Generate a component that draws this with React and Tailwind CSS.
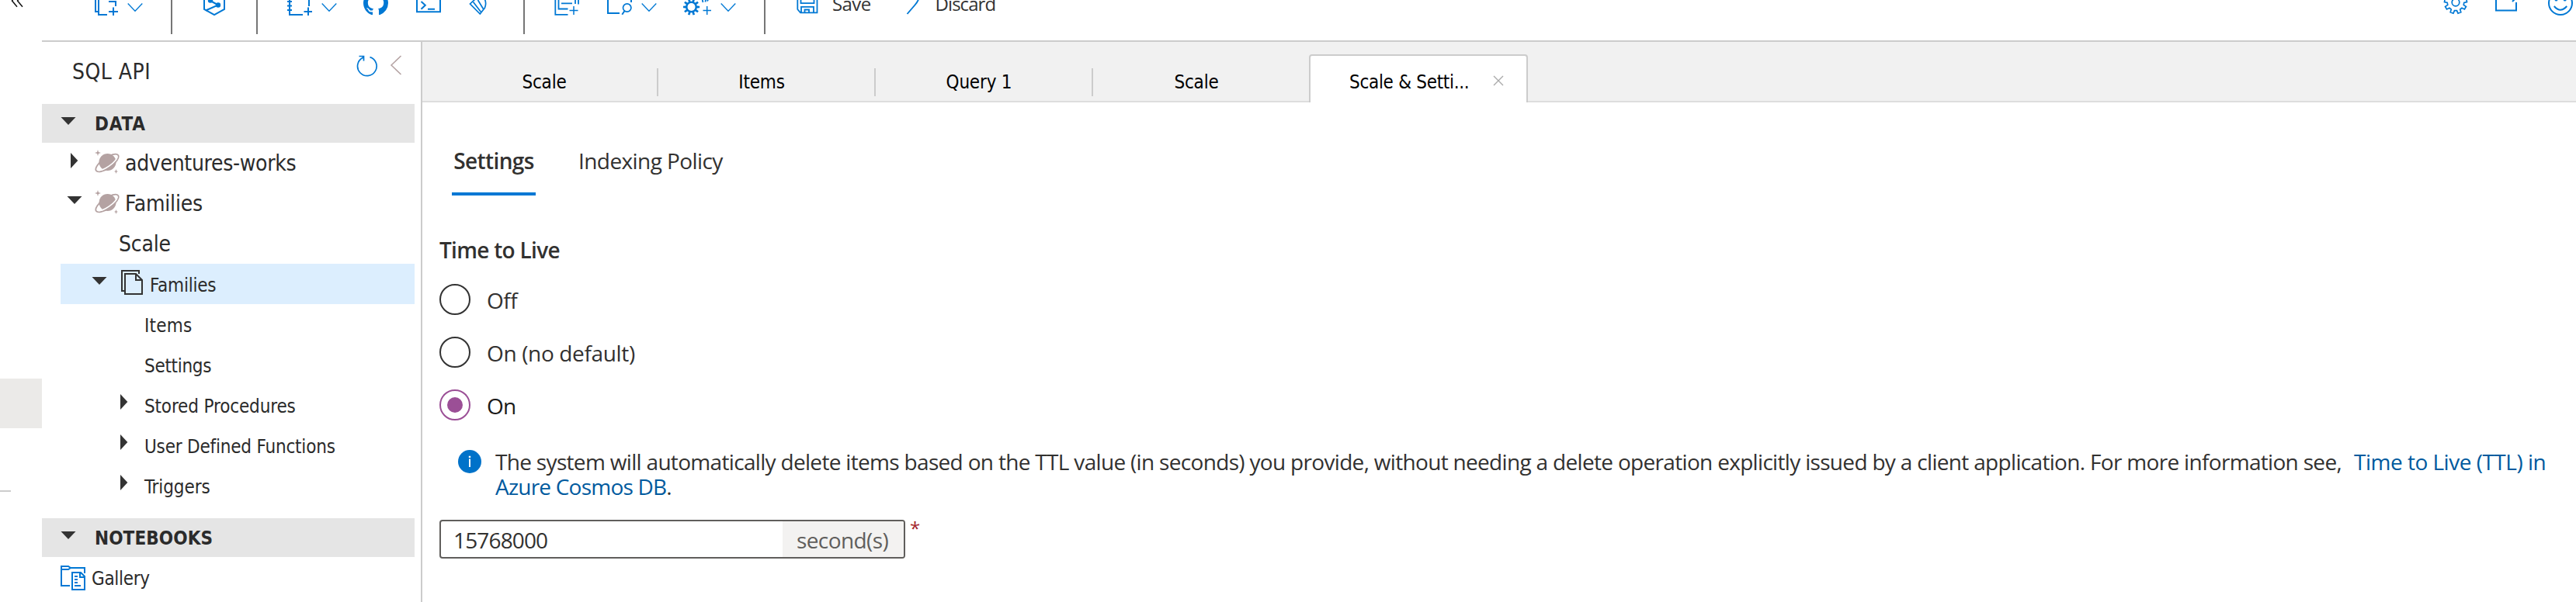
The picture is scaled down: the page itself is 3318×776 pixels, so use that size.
const BLUE = "#0078d4";

function Icon({ x, w, y = 0, h = 24, className = "", children }) {
  return (
    <svg
      width={w}
      height={h}
      viewBox={`${x} ${y} ${w} ${h}`}
      fill="none"
      stroke={BLUE}
      strokeWidth="2"
      className={`shrink-0 ${className}`}
    >
      {children}
    </svg>
  );
}

function gearPath(cx, cy, outer, inner, teeth) {
  const step = (Math.PI * 2) / teeth;
  const pts = [];
  for (let i = 0; i < teeth; i++) {
    const a = Math.PI / 2 + (i + 0.5) * step;
    [[-0.3, inner], [-0.2, outer], [0.2, outer], [0.3, inner]].forEach(([o, r]) => {
      pts.push(`${(cx + Math.cos(a + o * step) * r).toFixed(2)} ${(cy + Math.sin(a + o * step) * r).toFixed(2)}`);
    });
  }
  return `M${pts.join("L")}Z`;
}

function Chevron({ className }) {
  return (
    <Icon x={0} w={20} className={className}>
      <path d="M0.7 4.5L10 14.3L19.3 4.5" strokeWidth="1.3" />
    </Icon>
  );
}

function Separator({ className }) {
  return <div className={`h-[44px] w-[2px] shrink-0 bg-[#767676] ${className}`} />;
}

function Toolbar() {
  return (
    <header className="flex h-[54px] items-start overflow-hidden">
      <Icon x={14} w={16} className="ml-[14px]">
        <path d="M21 -6L15.5 1L22 8.7M28 -6L22.5 1L29 8.7" stroke="#111" strokeWidth="1.5" />
      </Icon>
      <div className="flex h-[54px] flex-1 items-start ml-[24px] border-b-2 border-[#cccccc]">
        <Icon x={122} w={32} className="ml-[68px]">
          <path d="M123 -2V15H127M127 -2V19H138M140 2H149V8" />
          <path d="M140 15H152M146 9.5V20" />
        </Icon>
        <Chevron className="ml-[10px]" />
        <Separator className="ml-[36px]" />
        <Icon x={262} w={28} className="ml-[40px]">
          <path d="M263 -3V11.8L276 19L289 11.8V-3" />
          <path d="M271 1L281 6.5L265 13.5" />
          <circle cx="271" cy="0.5" r="2.2" fill={BLUE} />
          <circle cx="281" cy="6.5" r="2.2" fill={BLUE} />
        </Icon>
        <Separator className="ml-[40px]" />
        <Icon x={370} w={32} className="ml-[38px]">
          <path d="M373 -2V19H390M398 -2V8M370 2H376M370 7.5H376M370 13H376" />
          <path d="M391.5 15H402M397 9.5V20" />
        </Icon>
        <Chevron className="ml-[12px]" />
        <Icon x={468} w={32} className="ml-[34px]">
          <g transform="translate(468 -12) scale(2)" fill={BLUE} stroke="none">
            <path d="M8 0C3.58 0 0 3.58 0 8c0 3.54 2.29 6.53 5.47 7.59.4.07.55-.17.55-.38 0-.19-.01-.82-.01-1.49-2.01.37-2.53-.49-2.69-.94-.09-.23-.48-.94-.82-1.13-.28-.15-.68-.52-.01-.53.63-.01 1.08.58 1.23.82.72 1.21 1.87.87 2.33.66.07-.52.28-.87.51-1.07-1.78-.2-3.64-.89-3.64-3.95 0-.87.31-1.59.82-2.15-.08-.2-.36-1.02.08-2.12 0 0 .67-.21 2.2.82.64-.18 1.32-.27 2-.27.68 0 1.36.09 2 .27 1.53-1.04 2.2-.82 2.2-.82.44 1.1.16 1.92.08 2.12.51.56.82 1.27.82 2.15 0 3.07-1.87 3.75-3.65 3.95.29.25.54.73.54 1.48 0 1.07-.01 1.93-.01 2.2 0 .21.15.46.55.38A8.013 8.013 0 0016 8c0-4.42-3.58-8-8-8z" />
          </g>
        </Icon>
        <Icon x={536} w={32} className="ml-[36px]">
          <path d="M537 -2V15.3H567V-2M542.5 2L547.8 6.7L542.5 11.7M551 11.7H560" />
        </Icon>
        <Icon x={604} w={24} className="ml-[36px]">
          <path d="M613 -2L605.5 5L618.3 18L624.5 10Q627 4 624 -2" strokeWidth="1.7" />
          <path d="M609.5 2.5L619.5 15.5M615.5 0L622.5 11.5" strokeWidth="1.7" />
        </Icon>
        <Separator className="ml-[46px]" />
        <Icon x={714} w={32} className="ml-[38px]">
          <path d="M715.3 -2V18.8H731.5M719.5 -2V11.5H731.5M723 4.3H737M741 -2V5M745 -2V5.5" strokeWidth="1.8" />
          <path d="M733.5 13.5H744.5M739 8V19" strokeWidth="1.5" />
        </Icon>
        <Icon x={782} w={34} className="ml-[36px]">
          <path d="M783 -2V17H798M813 -2V3" />
          <circle cx="807.7" cy="10" r="5.2" strokeWidth="1.7" />
          <path d="M804.5 14L801.3 18.7" />
        </Icon>
        <Chevron className="ml-[10px]" />
        <Icon x={880} w={38} className="ml-[34px]">
          <path d={gearPath(890.5, 9, 10.7, 7.4, 10)} fill={BLUE} stroke="none" />
          <circle cx="890.5" cy="9" r="5" fill="#fff" stroke="none" />
          <path d="M904.5 -1L905.5 3M909 -1L908.5 2.5M912 -0.5L911 1.5" strokeWidth="1.8" />
          <path d="M905.5 13.5H916M910.7 8V19" strokeWidth="1.5" />
        </Icon>
        <Chevron className="ml-[10px]" />
        <Separator className="ml-[36px]" />
        <div className="ml-[40px] flex items-start font-['Open_Sans',sans-serif] text-[24px] leading-[24px] text-[#333]">
          <Icon x={1026} w={28}>
            <path d="M1027.3 -3V12L1031 16.3H1052.5V-3M1031.5 -3V4.2H1048.5V-3M1032 16V8.8H1048V16M1036.5 16V12.5H1042V16" strokeWidth="1.8" />
          </Icon>
          <span className="-mt-[7px] ml-[18px] tracking-[-0.6px]">Save</span>
          <Icon x={1166} w={20} className="ml-[45px]">
            <path d="M1167.5 18L1177 7Q1181.500 2 1182.8 -3" strokeWidth="1.9" />
          </Icon>
          <span className="-mt-[7px] ml-[18px] tracking-[-0.95px]">Discard</span>
        </div>
        <div className="ml-auto flex items-start pr-[3px]">
          <Icon x={3147} w={32}>
            <path d={gearPath(3163, 3, 14.5, 10.8, 9)} strokeWidth="1.7" />
            <circle cx="3163" cy="3" r="4.8" strokeWidth="1.7" />
          </Icon>
          <Icon x={3213} w={30} className="ml-[34px]">
            <path d="M3215 -2V13.5H3241V3M3236 2L3239 -1" />
          </Icon>
          <Icon x={3281} w={34} className="ml-[38px]">
            <circle cx="3298" cy="4" r="15" />
            <circle cx="3292.5" cy="-0.5" r="2" fill={BLUE} stroke="none" />
            <circle cx="3303.7" cy="-0.5" r="2" fill={BLUE} stroke="none" />
            <path d="M3289.8 8Q3298 17.5 3306.2 8" />
          </Icon>
        </div>
      </div>
    </header>
  );
}

function CaretDown({ className = "" }) {
  return (
    <svg width="20" height="10" viewBox="0 0 20 10" className={`shrink-0 ${className}`}>
      <path d="M0.5 0H19.5L10 10Z" fill="#333" />
    </svg>
  );
}

function CaretRight({ className = "" }) {
  return (
    <svg width="10" height="20" viewBox="0 0 10 20" className={`shrink-0 ${className}`}>
      <path d="M0 0V20L9.3 10Z" fill="#333" />
    </svg>
  );
}

function Planet({ className = "" }) {
  return (
    <svg width="32" height="32" viewBox="0 0 32 32" className={`shrink-0 ${className}`}>
      <ellipse cx="16" cy="18" rx="17.3" ry="6.600" transform="rotate(-35 16 18)" fill="none" stroke="#b4a2a2" strokeWidth="1.800" />
      <circle cx="16.5" cy="17" r="11" fill="#b4a2a2" />
      <g transform="rotate(-35 16 18)" fill="none" stroke="#fff" strokeWidth="1.500">
        <path d="M0.700 18.500A15.500 5 0 0 0 31.300 18.500" />
      </g>
      <path d="M4 1L4.900 4.100L8 5L4.900 5.900L4 9L3.100 5.900L0 5L3.100 4.100Z" fill="#b4a2a2" />
      <path d="M27.500 26L28.200 28.300L30 29L28.200 29.700L27.500 32L26.800 29.700L25 29L26.800 28.300Z" fill="#b4a2a2" />
    </svg>
  );
}

function SectionBar({ label, tracking }) {
  return (
    <div className="flex h-[50px] w-[480px] items-center bg-[#e5e5e5] pl-[24px]">
      <CaretDown className="-mt-[7px]" />
      <span className={`ml-[24px] mt-[2px] text-[24px] font-bold leading-[30px] ${tracking}`}>{label}</span>
    </div>
  );
}

function Leaf({ label, tracking, caret }) {
  return (
    <div className="flex h-[52px] items-center pl-[101px]">
      <div className="w-[31px]">{caret && <CaretRight className="-mt-[8px]" />}</div>
      <span className={`mt-[3px] text-[24px] leading-[30px] ${tracking}`}>{label}</span>
    </div>
  );
}

function Sidebar() {
  return (
    <aside className="w-[490px] shrink-0 border-r-2 border-[#cccccc] font-['DejaVu_Sans_Condensed','DejaVu_Sans',sans-serif] text-[#2b2b2b]">
      <div className="flex h-[80px] items-start pl-[39px] pr-[24px] pt-[16px]">
        <span className="mt-[7px] text-[28px] leading-[32px] tracking-[0.5px]">SQL API</span>
        <svg width="28" height="30" viewBox="0 0 28 30" fill="none" stroke={BLUE} strokeWidth="1.700" className="ml-auto">
          <path d="M3.500 2.500H9.500V8.500M9.300 2.800L8 4.500A12.300 12.300 0 1 0 17.500 3.600" />
        </svg>
        <svg width="16" height="28" viewBox="0 0 16 28" fill="none" stroke="#b4a2a2" strokeWidth="1.500" className="ml-[15px]">
          <path d="M14.500 2L2 14L14.500 26" />
        </svg>
      </div>
      <SectionBar label="DATA" tracking="tracking-[0.9px]" />
      <div className="flex h-[52px] items-center pl-[37px]">
        <CaretRight className="-mt-[6px]" />
        <Planet className="-mt-[5px] ml-[21px]" />
        <span className="ml-[7px] mt-[2px] text-[28px] leading-[32px] tracking-[-0.3px]">adventures-works</span>
      </div>
      <div className="flex h-[52px] items-center pl-[32px]">
        <CaretDown className="-mt-[8px]" />
        <Planet className="-mt-[5px] ml-[16px]" />
        <span className="ml-[7px] mt-[2px] text-[28px] leading-[32px] tracking-[-0.2px]">Families</span>
      </div>
      <div className="flex h-[52px] items-center pl-[99px]">
        <span className="mt-[2px] text-[28px] leading-[32px] tracking-[-0.2px]">Scale</span>
      </div>
      <div className="ml-[24px] flex h-[52px] w-[456px] items-center bg-[#dceefe] pl-[40px]">
        <CaretDown className="-mt-[8px]" />
        <svg width="30" height="34" viewBox="0 0 30 34" fill="none" stroke="#333" strokeWidth="2" className="-mt-[4px] ml-[17px]">
          <path d="M5 28H2V2H24V6" />
          <path d="M6 6H20L28 14V32H6ZM20 6V14H28" />
        </svg>
        <span className="ml-[8px] mt-[3px] text-[24px] leading-[30px] tracking-[-0.2px]">Families</span>
      </div>
      <Leaf label="Items" tracking="tracking-[0.2px]" />
      <Leaf label="Settings" tracking="tracking-[-0.3px]" />
      <Leaf label="Stored Procedures" tracking="tracking-[-0.15px]" caret />
      <Leaf label="User Defined Functions" tracking="tracking-[-0.2px]" caret />
      <Leaf label="Triggers" tracking="tracking-[-0.1px]" caret />
      <div className="h-[16px]" />
      <SectionBar label="NOTEBOOKS" tracking="tracking-[0.1px]" />
      <div className="flex h-[52px] items-center pl-[24px]">
        <svg width="32" height="32" viewBox="0 0 32 32" fill="none" stroke={BLUE} strokeWidth="2" className="mt-[2px]">
          <path d="M12 26H1V1H10L13 3H31V10M1 5H10L13 3" />
          <path d="M15 9H26L31 14V31H15ZM25 9V15H31M18 14H22M18 18H22M18 22H22M18 26H26" />
        </svg>
        <span className="ml-[8px] mt-[4px] text-[24px] leading-[30px] tracking-[-0.3px]">Gallery</span>
      </div>
    </aside>
  );
}

const tabs = ["Scale", "Items", "Query 1"];

function TabStrip() {
  return (
    <div className="flex h-[78px] items-end border-b-2 border-[#dddddd] bg-[#f1f1f1] pl-[24px] font-['DejaVu_Sans_Condensed','DejaVu_Sans',sans-serif] text-[24px] leading-[36px] tracking-[-0.2px] text-black">
      {tabs.map((t) => (
        <div key={t} className="mb-[6px] h-[36px] w-[280px] border-r-2 border-[#cccccc] pr-[12px] text-center">
          {t}
        </div>
      ))}
      <div className="mb-[6px] h-[36px] w-[278px] pr-[12px] text-center">Scale</div>
      <div className="-mb-[2px] flex h-[62px] w-[282px] items-start rounded-t-[4px] border-x-2 border-t-2 border-[#cccccc] bg-white pl-[50px] pt-[16px]">
        <span className="w-[154px] whitespace-nowrap tracking-[-0.3px]">Scale &amp; Setti...</span>
        <svg width="14" height="14" viewBox="0 0 14 14" fill="none" stroke="#aaa" strokeWidth="1.400" className="ml-[31px] mt-[9px]">
          <path d="M1 1L13 13M13 1L1 13" />
        </svg>
      </div>
    </div>
  );
}

function Radio({ label, tracking, checked }) {
  return (
    <div className="flex h-[40px] items-center">
      <div
        className={`flex h-[40px] w-[40px] items-center justify-center rounded-full border-2 ${
          checked ? "border-[#9b4f96]" : "border-[#333]"
        }`}
      >
        {checked && <div className="h-[20px] w-[20px] rounded-full bg-[#9b4f96]" />}
      </div>
      <span className={`ml-[21px] mt-[2px] leading-[40px] ${tracking} ${checked ? "text-[#1b1a19]" : ""}`}>{label}</span>
    </div>
  );
}

function SettingsPane() {
  return (
    <section className="pl-[22px] font-['Open_Sans',sans-serif] text-[28px] text-[#323130]">
      <div className="flex pl-[16px] pt-[32px]">
        <div className="h-[88px] w-[108px] border-b-4 border-[#0078d4] text-center font-semibold leading-[87px] tracking-[-0.6px]">
          Settings
        </div>
        <div className="ml-[55px] leading-[87px] tracking-[-0.58px]">Indexing Policy</div>
      </div>
      <div className="mt-[50px] font-semibold leading-[40px] tracking-[-0.7px]">Time to Live</div>
      <div className="mt-[24px] flex flex-col gap-[28px]">
        <Radio label="Off" tracking="tracking-[-0.5px]" />
        <Radio label="On (no default)" tracking="tracking-[-0.35px]" />
        <Radio label="On" tracking="tracking-[-0.9px]" checked />
      </div>
      <div className="mt-[37px] flex items-start pl-[24px]">
        <svg width="30" height="30" viewBox="0 0 30 30" className="mt-[1px] shrink-0">
          <circle cx="15" cy="15" r="15" fill="#0072c9" />
          <path d="M14 11.500H16V22H14ZM13.800 7.800H16.200V10H13.800Z" fill="#fff" />
        </svg>
        <p className="ml-[18px] whitespace-nowrap leading-[32px]">
          <span className="inline-block w-[2394px] tracking-[-0.68px]">
            The system will automatically delete items based on the TTL value (in seconds) you provide, without needing a
            delete operation explicitly issued by a client application. For more information see,
          </span>
          <a className="tracking-[-0.5px] text-[#005a9e]">Time to Live (TTL) in</a>
          <br />
          <a className="tracking-[-0.78px] text-[#005a9e]">Azure Cosmos DB</a>.
        </p>
      </div>
      <div className="mt-[27px] flex items-start">
        <div className="flex h-[50px] w-[600px] overflow-hidden rounded-[4px] border-2 border-[#605e5c] leading-[46px]">
          <div className="flex-1 pl-[16px] pt-[1px] tracking-[-0.85px]">15768000</div>
          <div className="w-[156px] bg-[#f3f2f1] pl-[18px] pt-[1px] tracking-[-0.6px] text-[#605e5c]">second(s)</div>
        </div>
        <span className="ml-[6px] -mt-[4px] text-[24px] leading-[30px] text-[#a4262c]">*</span>
      </div>
    </section>
  );
}

export default function App() {
  return (
    <div className="flex h-[776px] w-[3318px] flex-col overflow-hidden bg-white">
      <Toolbar />
      <div className="flex min-h-0 flex-1">
        <nav className="w-[54px] shrink-0 pt-[434px]">
          <div className="h-[64px] bg-[#ebeae8]" />
          <div className="mt-[80px] h-[2px] w-[14px] bg-[#cccccc]" />
        </nav>
        <Sidebar />
        <main className="min-w-0 flex-1">
          <TabStrip />
          <SettingsPane />
        </main>
      </div>
    </div>
  );
}
